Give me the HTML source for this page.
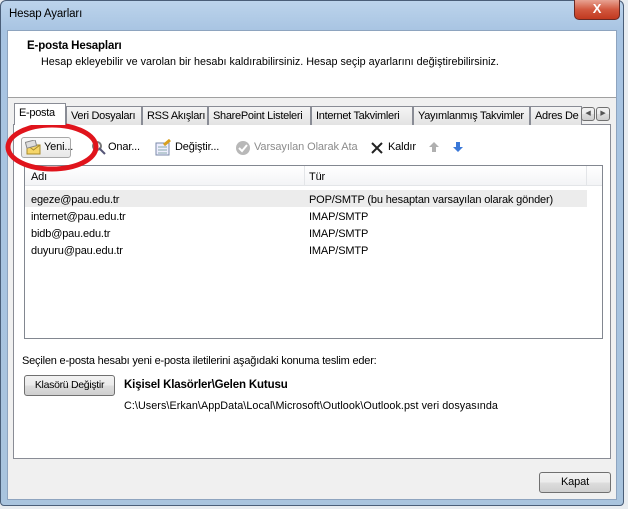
<!DOCTYPE html>
<html><head><meta charset="utf-8"><style>
*{box-sizing:border-box}
body{margin:0;width:628px;height:509px;overflow:hidden;background:#e8ecf0;font-family:"Liberation Sans","DejaVu Sans",sans-serif;font-size:11px;color:#000;position:relative;letter-spacing:-0.15px}
.abs{position:absolute}
.frame{left:0;top:0;width:624px;height:506px;border-radius:6px 6px 4px 4px;background:linear-gradient(180deg,#bcd4ec 0,#a8c4e2 30px,#a9c4de 100%);border:1px solid #4a5e78}
.inner{left:7px;top:30px;width:610px;height:470px;background:#f0f0f0;border:1px solid #8ea4bf}
.head{left:8px;top:31px;width:608px;height:67px;background:#fff;border-bottom:1px solid #a0a0a0}
.btn{border:1px solid #707070;border-radius:3px;background:linear-gradient(#f2f2f2,#ebebeb 50%,#dddddd 51%,#cfcfcf);text-align:center}
.tab{top:106px;height:19px;border:1px solid #898c95;border-bottom:none;background:linear-gradient(#f5f5f5,#e3e3e3);padding:3px 0 0 4px;white-space:nowrap;font-size:11px;overflow:hidden;letter-spacing:-0.3px}
</style></head><body>
<div class="abs frame"></div>
<div class="abs" style="left:9px;top:8px;font-size:11.5px">Hesap Ayarları</div>
<div class="abs" style="left:574px;top:0;width:46px;height:20px;border:1px solid #6b2a24;border-top:none;border-radius:0 0 5px 5px;background:linear-gradient(#e8a393,#d2583f 50%,#c1391f);color:#fff;font-weight:bold;font-size:13px;text-align:center;line-height:18px">X</div>
<div class="abs inner"></div>
<div class="abs head"></div>
<div class="abs" style="left:27px;top:40px;font-weight:bold;font-size:11.5px">E-posta Hesapları</div>
<div class="abs" style="left:41px;top:56px;font-size:10.8px;letter-spacing:0">Hesap ekleyebilir ve varolan bir hesabı kaldırabilirsiniz. Hesap seçip ayarlarını değiştirebilirsiniz.</div>
<div class="abs" style="left:13px;top:124px;width:598px;height:335px;background:#fff;border:1px solid #898c95"></div>
<div class="abs tab" style="left:14px;top:103px;height:22px;width:52px;background:#fff;border-bottom:none;z-index:2">E-posta</div>
<div class="abs tab" style="left:66px;width:76px">Veri Dosyaları</div>
<div class="abs tab" style="left:142px;width:66px">RSS Akışları</div>
<div class="abs tab" style="left:208px;width:103px">SharePoint Listeleri</div>
<div class="abs tab" style="left:311px;width:102px">Internet Takvimleri</div>
<div class="abs tab" style="left:413px;width:117px">Yayımlanmış Takvimler</div>
<div class="abs tab" style="left:530px;width:52px">Adres De</div>
<div class="abs btn" style="left:581px;top:107px;width:14px;height:14px;font-size:7px;line-height:12px;color:#555">◀</div>
<div class="abs btn" style="left:596px;top:107px;width:14px;height:14px;font-size:7px;line-height:12px;color:#555">▶</div>
<!-- toolbar -->
<div class="abs btn" style="left:21px;top:137px;width:50px;height:21px;border-color:#a8a8a8;background:linear-gradient(#fafafa,#e8e8e8)"></div>
<svg class="abs" style="left:25px;top:140px" width="16" height="16"><rect x="2" y="5" width="13" height="9" fill="#f6d66a" stroke="#a88a2a"/><path d="M2 5l6.5 5 6.5-5" fill="none" stroke="#a88a2a"/><rect x="1" y="1" width="10" height="6" fill="#ddd" stroke="#888" transform="rotate(-15 6 4)"/></svg>
<div class="abs" style="left:44px;top:141px;font-size:11px">Yeni...</div>
<svg class="abs" style="left:91px;top:140px" width="16" height="16"><circle cx="6" cy="6" r="4" fill="none" stroke="#777" stroke-width="2"/><path d="M8 8l6 6" stroke="#557" stroke-width="2"/></svg>
<div class="abs" style="left:108px;top:141px;font-size:11px">Onar...</div>
<svg class="abs" style="left:155px;top:139px" width="17" height="17"><rect x="1" y="4" width="13" height="12" fill="#eef" stroke="#7a8aa8"/><path d="M3 8h9M3 11h9M3 14h9" stroke="#8aa"/><path d="M9 6l6-5" stroke="#d8a020" stroke-width="3"/></svg>
<div class="abs" style="left:175px;top:141px;font-size:11px">Değiştir...</div>
<svg class="abs" style="left:235px;top:140px" width="16" height="16"><circle cx="8" cy="8" r="7" fill="#b8b8b8"/><path d="M4 8l3 3 5-6" fill="none" stroke="#fff" stroke-width="2"/></svg>
<div class="abs" style="left:254px;top:141px;font-size:11px;color:#8c8c8c;letter-spacing:-0.1px">Varsayılan Olarak Ata</div>
<svg class="abs" style="left:370px;top:141px" width="14" height="14"><path d="M2 2l10 10M12 2L2 12" stroke="#222" stroke-width="2"/></svg>
<div class="abs" style="left:388px;top:141px;font-size:11px">Kaldır</div>
<svg class="abs" style="left:428px;top:141px" width="12" height="12"><path d="M6 1l5 5H8v5H4V6H1z" fill="#b0b0b0"/></svg>
<svg class="abs" style="left:452px;top:141px" width="12" height="12"><path d="M6 11l5-5H8V1H4v5H1z" fill="#3a78d8"/></svg>
<!-- list -->
<div class="abs" style="left:24px;top:165px;width:579px;height:174px;border:1px solid #828790;background:#fff"></div>
<div class="abs" style="left:25px;top:166px;width:577px;height:20px;background:linear-gradient(#fff,#f3f4f6);border-bottom:1px solid #e3e5e8"></div>
<div class="abs" style="left:304px;top:166px;width:1px;height:20px;background:#e3e5e8"></div>
<div class="abs" style="left:586px;top:166px;width:1px;height:20px;background:#e3e5e8"></div>
<div class="abs" style="left:31px;top:171px;font-size:11px">Adı</div>
<div class="abs" style="left:309px;top:171px;font-size:11px">Tür</div>
<div class="abs" style="left:25px;top:190px;width:562px;height:17px;background:#ececec"></div>
<div class="abs" style="left:31px;top:192px;font-size:11px;line-height:17px">egeze@pau.edu.tr<br>internet@pau.edu.tr<br>bidb@pau.edu.tr<br>duyuru@pau.edu.tr</div>
<div class="abs" style="left:309px;top:192px;font-size:11px;line-height:17px">POP/SMTP (bu hesaptan varsayılan olarak gönder)<br>IMAP/SMTP<br>IMAP/SMTP<br>IMAP/SMTP</div>
<div class="abs" style="left:22px;top:355px;font-size:11px;letter-spacing:-0.2px">Seçilen e-posta hesabı yeni e-posta iletilerini aşağıdaki konuma teslim eder:</div>
<div class="abs btn" style="left:24px;top:375px;width:91px;height:21px;line-height:19px;font-size:10.5px;letter-spacing:-0.3px">Klasörü Değiştir</div>
<div class="abs" style="left:124px;top:379px;font-weight:bold;font-size:11.5px">Kişisel Klasörler\Gelen Kutusu</div>
<div class="abs" style="left:124px;top:400px;font-size:10.8px;letter-spacing:0.05px">C:\Users\Erkan\AppData\Local\Microsoft\Outlook\Outlook.pst veri dosyasında</div>
<div class="abs btn" style="left:539px;top:472px;width:72px;height:21px;line-height:19px;font-size:11px">Kapat</div>
<svg class="abs" style="left:0;top:115px" width="120" height="70"><ellipse cx="52" cy="32" rx="44" ry="22" fill="none" stroke="#e0141c" stroke-width="5"/></svg>
</body></html>
